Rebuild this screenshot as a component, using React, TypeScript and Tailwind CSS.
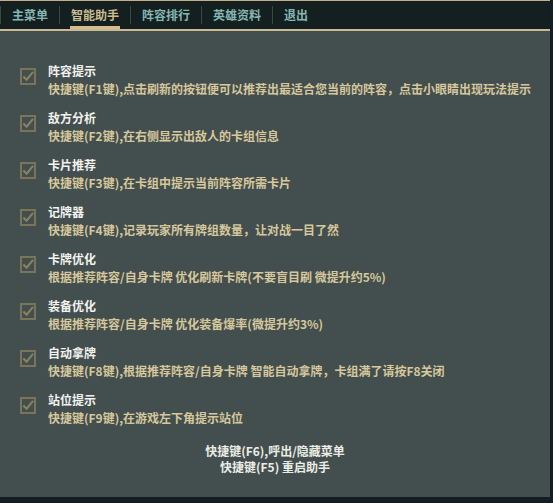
import React from 'react';

type Feature = { title: string; desc: string };

const features: Feature[] = [
  { title: '阵容提示', desc: '快捷键(F1键),点击刷新的按钮便可以推荐出最适合您当前的阵容，点击小眼睛出现玩法提示' },
  { title: '敌方分析', desc: '快捷键(F2键),在右侧显示出敌人的卡组信息' },
  { title: '卡片推荐', desc: '快捷键(F3键),在卡组中提示当前阵容所需卡片' },
  { title: '记牌器', desc: '快捷键(F4键),记录玩家所有牌组数量，让对战一目了然' },
  { title: '卡牌优化', desc: '根据推荐阵容/自身卡牌 优化刷新卡牌(不要盲目刷 微提升约5%)' },
  { title: '装备优化', desc: '根据推荐阵容/自身卡牌 优化装备爆率(微提升约3%)' },
  { title: '自动拿牌', desc: '快捷键(F8键),根据推荐阵容/自身卡牌 智能自动拿牌，卡组满了请按F8关闭' },
  { title: '站位提示', desc: '快捷键(F9键),在游戏左下角提示站位' },
];

const tabs = ['主菜单', '智能助手', '阵容排行', '英雄资料', '退出'];

function CheckBox() {
  return (
    <div className="w-4 h-[17px] mt-[6px] border-2 border-[#7a7458] flex items-center justify-center shrink-0">
      <svg width="13" height="13" viewBox="0 0 13 13" fill="none">
        <path d="M1.5 6.5 L5 10 L12 1.5" stroke="#8a8360" strokeWidth="2.2" />
      </svg>
    </div>
  );
}

export default function App() {
  return (
    <div
      className="w-[553px] h-[503px] bg-[#141c24] flex flex-col overflow-hidden"
      style={{ fontFamily: '"Noto Sans CJK SC", "Noto Sans", sans-serif' }}
    >
      <div className="w-[550px] flex flex-col flex-1">
        <div className="h-px bg-[#c2b08c]" />
        <div className="h-7 bg-[#13201f] flex items-stretch">
          {tabs.map((t, i) => {
            const active = i === 1;
            return (
              <React.Fragment key={t}>
                <div className="w-px bg-[#3a4748] my-[5px]" />
                <div className="relative flex items-center px-[11px]">
                  <span
                    className={
                      'text-[12px] font-bold leading-none ' +
                      (active ? 'text-[#cdbb92]' : 'text-[#86b6b4]')
                    }
                  >
                    {t}
                  </span>
                  {active ? (
                    <div className="absolute left-[10px] right-[10px] bottom-0 h-[3px] bg-[#d6bd8e]" />
                  ) : null}
                </div>
              </React.Fragment>
            );
          })}
        </div>
        <div className="h-[2px] bg-[#c9b994]" />
        <div className="flex-1 bg-[#434f4e] flex flex-col mb-[6px]">
          <div className="flex flex-col gap-[11px] pt-[31px] pl-5">
            {features.map((f) => (
              <div key={f.title} className="flex gap-3 h-9">
                <CheckBox />
                <div className="flex flex-col">
                  <div className="text-[12px] font-bold leading-[18px] text-[#f2f2ee]">{f.title}</div>
                  <div className="text-[12px] font-bold leading-[18px] text-[#d6c79c] whitespace-nowrap">
                    {f.desc}
                  </div>
                </div>
              </div>
            ))}
          </div>
          <div className="flex flex-col items-center mt-4 text-[12px] font-bold leading-4 text-[#ecece6]">
            <div>快捷键(F6),呼出/隐藏菜单</div>
            <div>快捷键(F5) 重启助手</div>
          </div>
        </div>
      </div>
    </div>
  );
}
